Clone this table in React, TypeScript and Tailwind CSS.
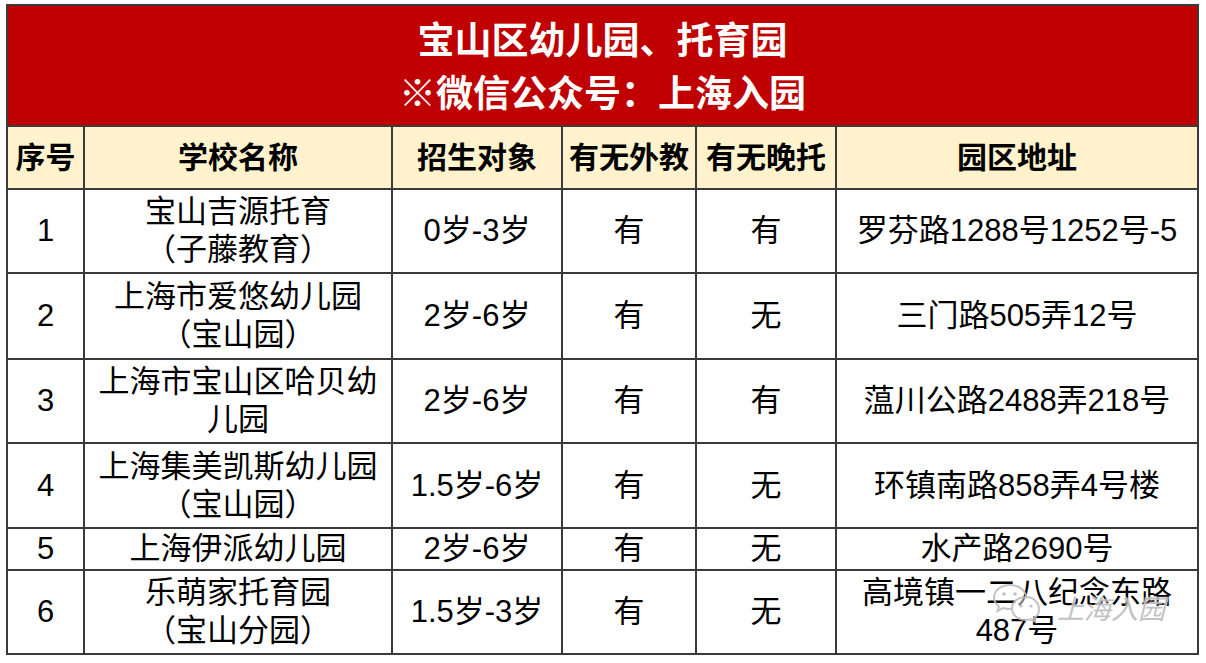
import { type JSX } from 'react';

type Row = {
  no: string;
  name: string[];
  age: string;
  foreign: string;
  late: string;
  addr: string[];
  h: string;
};

const ROWS: Row[] = [
  { no: '1', name: ['宝山吉源托育', '（子藤教育）'], age: '0岁-3岁', foreign: '有', late: '有', addr: ['罗芬路1288号1252号-5'], h: 'h-[84px]' },
  { no: '2', name: ['上海市爱悠幼儿园', '（宝山园）'], age: '2岁-6岁', foreign: '有', late: '无', addr: ['三门路505弄12号'], h: 'h-[86px]' },
  { no: '3', name: ['上海市宝山区哈贝幼', '儿园'], age: '2岁-6岁', foreign: '有', late: '有', addr: ['蕰川公路2488弄218号'], h: 'h-[84px]' },
  { no: '4', name: ['上海集美凯斯幼儿园', '（宝山园）'], age: '1.5岁-6岁', foreign: '有', late: '无', addr: ['环镇南路858弄4号楼'], h: 'h-[85px]' },
  { no: '5', name: ['上海伊派幼儿园'], age: '2岁-6岁', foreign: '有', late: '无', addr: ['水产路2690号'], h: 'h-[42px]' },
  { no: '6', name: ['乐萌家托育园', '（宝山分园）'], age: '1.5岁-3岁', foreign: '有', late: '无', addr: ['高境镇一二八纪念东路', '487号'], h: 'h-[84px]' },
];

const HEADERS = ['序号', '学校名称', '招生对象', '有无外教', '有无晚托', '园区地址'];

const cell = 'border-2 border-[#3a3a3a] p-0 text-center align-middle';

function Lines({ lines }: { lines: string[] }): JSX.Element {
  return (
    <>
      {lines.map((l, i) => (
        <div key={i} className="whitespace-nowrap leading-[38px]">
          {l}
        </div>
      ))}
    </>
  );
}

// the "上海入园" account watermark laid over the last address cell
function WeChatMark(): JSX.Element {
  return (
    <div className="pointer-events-none absolute left-[991px] top-[583px] flex items-end gap-[10px] opacity-90">
      <svg width="56" height="42" viewBox="0 0 56 42" fill="none">
        <path
          d="M19 2C9.5 2 3 8 3 14.5c0 3.8 2 6.8 5 9l-1.5 4.5 5.5-3c2 .6 4 .9 6 .9.6 0 1.2 0 1.8-.1"
          stroke="#bdbdbd"
          strokeWidth="2"
          strokeLinecap="round"
        />
        <path d="M35 12.5c-2-7-9-10.5-16-10.5" stroke="#bdbdbd" strokeWidth="2" strokeLinecap="round" />
        <circle cx="13" cy="11" r="1.8" fill="#bdbdbd" />
        <circle cx="24" cy="11" r="1.8" fill="#bdbdbd" />
        <path
          d="M35 14c-8 0-14 5-14 11.5S27 37 35 37c1.7 0 3.3-.2 4.8-.7l4.7 2.7-1.2-4c3-2 4.7-5 4.7-8.5C48 19 42 14 35 14z"
          stroke="#bdbdbd"
          strokeWidth="2"
          fill="#ffffff"
          fillOpacity="0.55"
        />
        <circle cx="30" cy="23" r="1.6" fill="#bdbdbd" />
        <circle cx="40" cy="23" r="1.6" fill="#bdbdbd" />
      </svg>
      <span className="pb-[1px] text-[27px] font-normal italic leading-none text-[#bcbcbc] [text-shadow:0_0_1px_#ffffff,0_0_2px_#ffffff]">
        上海入园
      </span>
    </div>
  );
}

export default function App(): JSX.Element {
  return (
    <div className="relative h-[663px] w-[1206px] overflow-hidden bg-white font-['Liberation_Sans','Noto_Sans_CJK_SC',sans-serif] text-black">
      <div className="pl-[6px] pt-[4px]">
        <table className="table-fixed border-collapse">
          <colgroup>
            <col className="w-[77px]" />
            <col className="w-[308px]" />
            <col className="w-[170px]" />
            <col className="w-[134px]" />
            <col className="w-[140px]" />
            <col className="w-[362px]" />
          </colgroup>
          <tbody>
            <tr className="h-[121px]">
              <td colSpan={6} className={`${cell} bg-[#c00000] pt-[4px] text-[37px] font-bold text-white`}>
                <div className="leading-[53px]">宝山区幼儿园、托育园</div>
                <div className="leading-[53px]">※微信公众号：上海入园</div>
              </td>
            </tr>
            <tr className="h-[63px]">
              {HEADERS.map((h) => (
                <td key={h} className={`${cell} bg-[#fff2cc] text-[30px] font-bold leading-none`}>
                  {h}
                </td>
              ))}
            </tr>
            {ROWS.map((r) => (
              <tr key={r.no} className={`${r.h} text-[31px] leading-[38px]`}>
                <td className={cell}>{r.no}</td>
                <td className={cell}>
                  <Lines lines={r.name} />
                </td>
                <td className={cell}>{r.age}</td>
                <td className={cell}>{r.foreign}</td>
                <td className={cell}>{r.late}</td>
                <td className={cell}>
                  <Lines lines={r.addr} />
                </td>
              </tr>
            ))}
          </tbody>
        </table>
      </div>
      <WeChatMark />
    </div>
  );
}
